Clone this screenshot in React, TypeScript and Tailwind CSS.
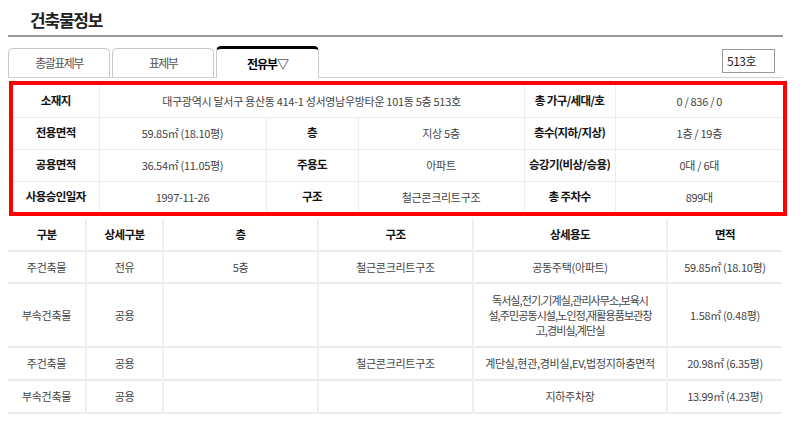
const FONT = { fontFamily: '"Noto Sans CJK KR", "Noto Sans", sans-serif' };

const summary: { label: string; value: string; span?: number }[][] = [
  [
    { label: '소재지', value: '대구광역시 달서구 용산동 414-1 성서영남우방타운 101동 5층 513호', span: 3 },
    { label: '총 가구/세대/호', value: '0 / 836 / 0' },
  ],
  [
    { label: '전용면적', value: '59.85㎡ (18.10평)' },
    { label: '층', value: '지상 5층' },
    { label: '층수(지하/지상)', value: '1층 / 19층' },
  ],
  [
    { label: '공용면적', value: '36.54㎡ (11.05평)' },
    { label: '주용도', value: '아파트' },
    { label: '승강기(비상/승용)', value: '0대 / 6대' },
  ],
  [
    { label: '사용승인일자', value: '1997-11-26' },
    { label: '구조', value: '철근콘크리트구조' },
    { label: '총 주차수', value: '899대' },
  ],
];

const detailRows = [
  { h: 'h-[32px]', cells: ['주건축물', '전유', '5층', '철근콘크리트구조', '공동주택(아파트)', '59.85㎡ (18.10평)'] },
  { h: 'h-[64px]', cells: ['부속건축물', '공용', '', '', 'MULTI', '1.58㎡ (0.48평)'] },
  { h: 'h-[33px]', cells: ['주건축물', '공용', '', '철근콘크리트구조', '계단실,현관,경비실,EV,법정지하층면적', '20.98㎡ (6.35평)'] },
  { h: 'h-[33px]', cells: ['부속건축물', '공용', '', '', '지하주차장', '13.99㎡ (4.23평)'] },
];

function Tab({ label, active }: { label: string; active?: boolean }) {
  if (active) {
    return (
      <div className="w-[103px] h-[32px] -mb-px flex items-center justify-center bg-white border-x border-[#c8c8c8] border-t-[3px] border-t-black rounded-t-[5px] text-[12px] tracking-[-1px] font-bold text-black">
        {label}
      </div>
    );
  }
  return (
    <div className="w-[102px] h-[29px] flex items-center justify-center bg-white border border-b-0 border-[#c8c8c8] rounded-t-[5px] text-[12px] tracking-[-1.5px] text-[#555]">
      {label}
    </div>
  );
}

export default function App() {
  return (
    <div className="w-[800px] h-[430px] bg-white overflow-hidden" style={FONT}>
      <div className="px-2 pt-[8px]">
        <div className="flex">
          <h1 className="ml-[22px] text-[17px] leading-[24px] tracking-[-1.2px] font-bold text-[#222]">건축물정보</h1>
        </div>
        <div className="mt-[3px] w-[775px] h-[2px] bg-[#9a9a9a]" />

        {/* tabs */}
        <div className="mt-[9px] w-[775px] flex items-end border-b border-[#d0d0d0]">
          <div className="flex items-end gap-[2px]">
            <Tab label="총괄표제부" />
            <Tab label="표제부" />
            <Tab label="전유부▽" active />
          </div>
          <div className="ml-auto mb-[4px] mr-[8px] w-[53px] h-[24px] border border-[#9a9a9a] flex items-center pl-[4px] text-[12px] tracking-[-0.5px] text-[#222]">
            513호
          </div>
        </div>

        {/* summary */}
        <div className="mt-[3px] ml-px w-[778px] border-4 border-[#ff0000]">
          <table className="w-[770px] table-fixed border-collapse text-[11px] tracking-[-0.3px]">
            <colgroup>
              <col className="w-[86px]" />
              <col className="w-[167px]" />
              <col className="w-[92px]" />
              <col className="w-[166px]" />
              <col className="w-[91px]" />
              <col className="w-[168px]" />
            </colgroup>
            <tbody>
              {summary.map((row, i) => (
                <tr key={i} className={i < summary.length - 1 ? 'h-[32px] border-b border-[#ececec]' : 'h-[31px]'}>
                  {row.flatMap((c, j) => [
                    <th key={`l${j}`} className="border-r border-[#ececec] font-bold text-[11.5px] tracking-[-0.6px] text-[#111] text-center whitespace-nowrap">
                      {c.label}
                    </th>,
                    <td
                      key={`v${j}`}
                      colSpan={c.span ?? 1}
                      className={`text-center text-[#444] ${j < row.length - 1 ? 'border-r border-[#ececec]' : ''}`}
                    >
                      {c.value}
                    </td>,
                  ])}
                </tr>
              ))}
            </tbody>
          </table>
        </div>

        {/* detail */}
        <table className="mt-[3px] w-[774px] table-fixed border-collapse text-[11px] tracking-[-0.3px]">
          <colgroup>
            <col className="w-[78px]" />
            <col className="w-[77px]" />
            <col className="w-[155px]" />
            <col className="w-[155px]" />
            <col className="w-[194px]" />
            <col className="w-[115px]" />
          </colgroup>
          <thead>
            <tr className="h-[32px] border-b-2 border-[#ececec]">
              {['구분', '상세구분', '층', '구조', '상세용도', '면적'].map((h, i) => (
                <th key={h} className={`font-bold text-[11.5px] tracking-[-0.6px] text-[#111] text-center ${i < 5 ? 'border-r-2 border-[#f0f0f0]' : ''}`}>
                  {h}
                </th>
              ))}
            </tr>
          </thead>
          <tbody>
            {detailRows.map((r, i) => (
              <tr key={i} className={`${r.h} border-b-2 border-[#ececec]`}>
                {r.cells.map((c, j) => (
                  <td
                    key={j}
                    className={`px-0 text-center text-[#444] whitespace-nowrap ${j < 5 ? 'border-r-2 border-[#f0f0f0]' : ''}`}
                  >
                    {c === 'MULTI' ? (
                      <span className="block leading-[15px] tracking-[-0.9px]">
                        독서실,전기.기계실,관리사무소,보육시
                        <br />
                        설,주민공동시설,노인정,재활용품보관창
                        <br />
                        고,경비실,계단실
                      </span>
                    ) : (
                      c
                    )}
                  </td>
                ))}
              </tr>
            ))}
          </tbody>
        </table>
      </div>
    </div>
  );
}
